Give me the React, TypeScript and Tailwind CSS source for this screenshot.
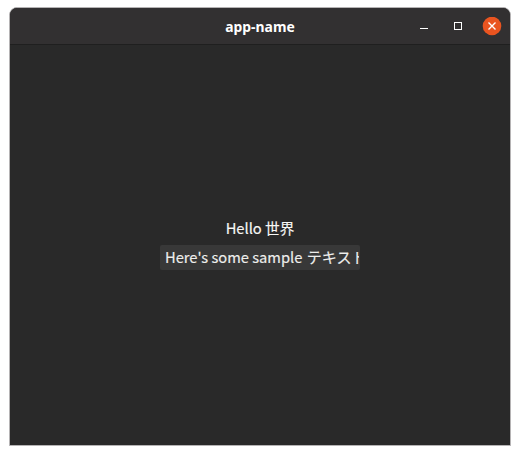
export default function App() {
  return (
    <div className="h-[455px] w-[520px] overflow-hidden bg-white px-[9px] pt-[7px]">
      <div className="flex h-[439px] w-[502px] flex-col overflow-hidden rounded-t-[8px] border border-[#b5b3b4] bg-[#292929]">
        <header className="grid h-[37px] shrink-0 grid-cols-[1fr_auto_1fr] items-center border-b border-[#1f1f1f] bg-[#323031] pt-[2px]">
          <span />
          <h1 className="font-['Noto_Sans',sans-serif] text-[13.9px] font-bold text-white">app-name</h1>
          <div className="flex items-center justify-end pr-[8px]">
            <svg width="82" height="20" viewBox="0 0 82 20" fill="none">
              <path d="M0 11.5h8" stroke="#fff" />
              <rect x="34.5" y="5.5" width="7" height="7" stroke="#fff" />
              <circle cx="72" cy="9" r="9.3" fill="#e95420" />
              <path d="M68.5 5.5l7 7M75.5 5.5l-7 7" stroke="#fff" strokeWidth="1.4" />
            </svg>
          </div>
        </header>
        <main className="flex grow flex-col items-center pt-[172px] font-['Noto_Sans_CJK_JP',sans-serif] text-[14.7px] leading-[22px] text-[#f7f7f5] [-webkit-text-stroke:0.15px_currentColor]">
          <p className="whitespace-nowrap">Hello 世界</p>
          <div className="mt-[6px] h-[25px] w-[200px] rounded-[2px] bg-[#383838] px-px text-[#eeeeec]">
            <div className="h-full overflow-hidden pl-[4px] leading-[24px] whitespace-nowrap">
              Here's some sample <span className="ml-[1px] text-[15px] tracking-[0.1px]">テキスト</span>
            </div>
          </div>
        </main>
      </div>
    </div>
  );
}
